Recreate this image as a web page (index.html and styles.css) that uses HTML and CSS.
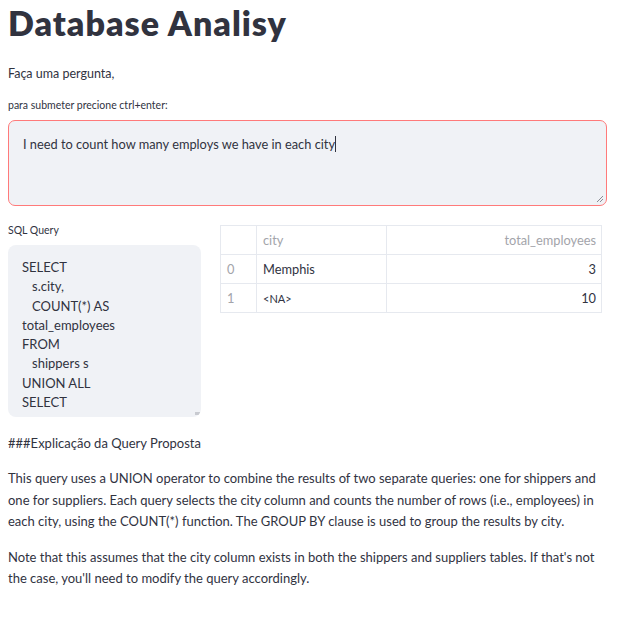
FILE: index.html
```html
<!DOCTYPE html>
<html>
<head>
<meta charset="utf-8">
<link rel="stylesheet" href="styles.css">
</head>
<body>
<main class="app">
  <h1 class="title">Database Analisy</h1>
  <p class="lead">Faça uma pergunta,</p>
  <label class="label">para submeter precione ctrl+enter:</label>
  <div class="textarea">
    <span class="typed">I need to count how many employs we have in each city</span><span class="caret"></span>
    <svg class="grip" width="8" height="8" viewBox="0 0 8 8"><path d="M7 1L1 7M7 4L4 7" stroke="#8a8b93" stroke-width="1"/></svg>
  </div>
  <div class="cols">
    <div class="col-left">
      <div class="label sql-label">SQL Query</div>
      <div class="code">
        <div>SELECT</div>
        <div class="ind">s.city,</div>
        <div class="ind">COUNT(*) AS</div>
        <div>total_employees</div>
        <div>FROM</div>
        <div class="ind">shippers s</div>
        <div>UNION ALL</div>
        <div>SELECT</div>
        <span class="mini-grip"></span>
      </div>
    </div>
    <div class="col-right">
      <table class="df">
        <thead>
          <tr><th class="idx"></th><th class="c-city">city</th><th class="num">total_employees</th></tr>
        </thead>
        <tbody>
          <tr><td class="idx">0</td><td>Memphis</td><td class="num">3</td></tr>
          <tr><td class="idx">1</td><td class="na">&lt;NA&gt;</td><td class="num">10</td></tr>
        </tbody>
      </table>
    </div>
  </div>
  <p class="heading-raw">###Explicação da Query Proposta</p>
  <p class="para">This query uses a UNION operator to combine the results of two separate queries: one for shippers and one for suppliers. Each query selects the city column and counts the number of rows (i.e., employees) in each city, using the COUNT(*) function. The GROUP BY clause is used to group the results by city.</p>
  <p class="para">Note that this assumes that the city column exists in both the shippers and suppliers tables. If that's not the case, you'll need to modify the query accordingly.</p>
</main>
</body>
</html>
```

FILE: styles.css
```css
* { box-sizing: border-box; }
html, body { margin: 0; padding: 0; background: #ffffff; }
body {
  font-family: Lato, "Noto Sans", sans-serif;
  color: #31333f;
  font-size: 13px;
}
.app {
  width: 620px;
  padding: 0 13px 0 8px;
}
.title {
  margin: 0;
  padding-top: 3px;
  font-size: 34px;
  line-height: 40px;
  font-weight: 800;
  letter-spacing: 1px;
  color: #31333f;
}
.lead {
  margin: 21px 0 0;
  font-size: 12.5px;
  line-height: 20px;
}
.label {
  display: block;
  font-size: 10.5px;
  line-height: 16px;
  margin-top: 13px;
  color: #31333f;
}
.textarea {
  position: relative;
  margin-top: 7px;
  height: 86px;
  border: 1px solid #ff7a7a;
  border-radius: 7px;
  background: #f0f2f6;
  padding: 13px 14px;
  font-size: 12.8px;
  line-height: 20px;
}
.caret {
  display: inline-block;
  width: 1px;
  height: 16px;
  background: #31333f;
  vertical-align: -3px;
}
.grip {
  position: absolute;
  right: 2px;
  bottom: 2px;
}
.cols {
  display: flex;
  gap: 19px;
  margin-top: 16px;
}
.col-left { width: 193px; flex: none; }
.col-right { flex: 1; padding-top: 3px; }
.sql-label { margin-top: 0; }
.code {
  position: relative;
  margin-top: 7px;
  height: 172px;
  background: #f0f2f6;
  border-radius: 8px;
  padding: 13px 14px;
  font-size: 13px;
  line-height: 19.3px;
  overflow: hidden;
}
.code .ind { padding-left: 10px; }
.mini-grip {
  position: absolute;
  right: 1px;
  bottom: 2px;
  width: 5px;
  height: 3px;
  background: #c8cad0;
}
.df {
  border-collapse: collapse;
  font-size: 12.8px;
  width: 382px;
}
.df th, .df td {
  border: 1px solid #e6e9ef;
  height: 29px;
  padding: 0 6px;
  text-align: left;
  font-weight: 400;
}
.df th { color: #a3a4aa; }
.df .idx { width: 36px; color: #a3a4aa; }
.df .c-city { width: 130px; }
.df .num { text-align: right; padding-right: 5px; }
.df .na { font-size: 11px; }
.heading-raw {
  margin: 16px 0 0;
  font-size: 13px;
  line-height: 20px;
}
.para {
  margin: 15px 0 0;
  font-size: 13px;
  line-height: 21.6px;
}
.para + .para { margin-top: 14px; }
```
